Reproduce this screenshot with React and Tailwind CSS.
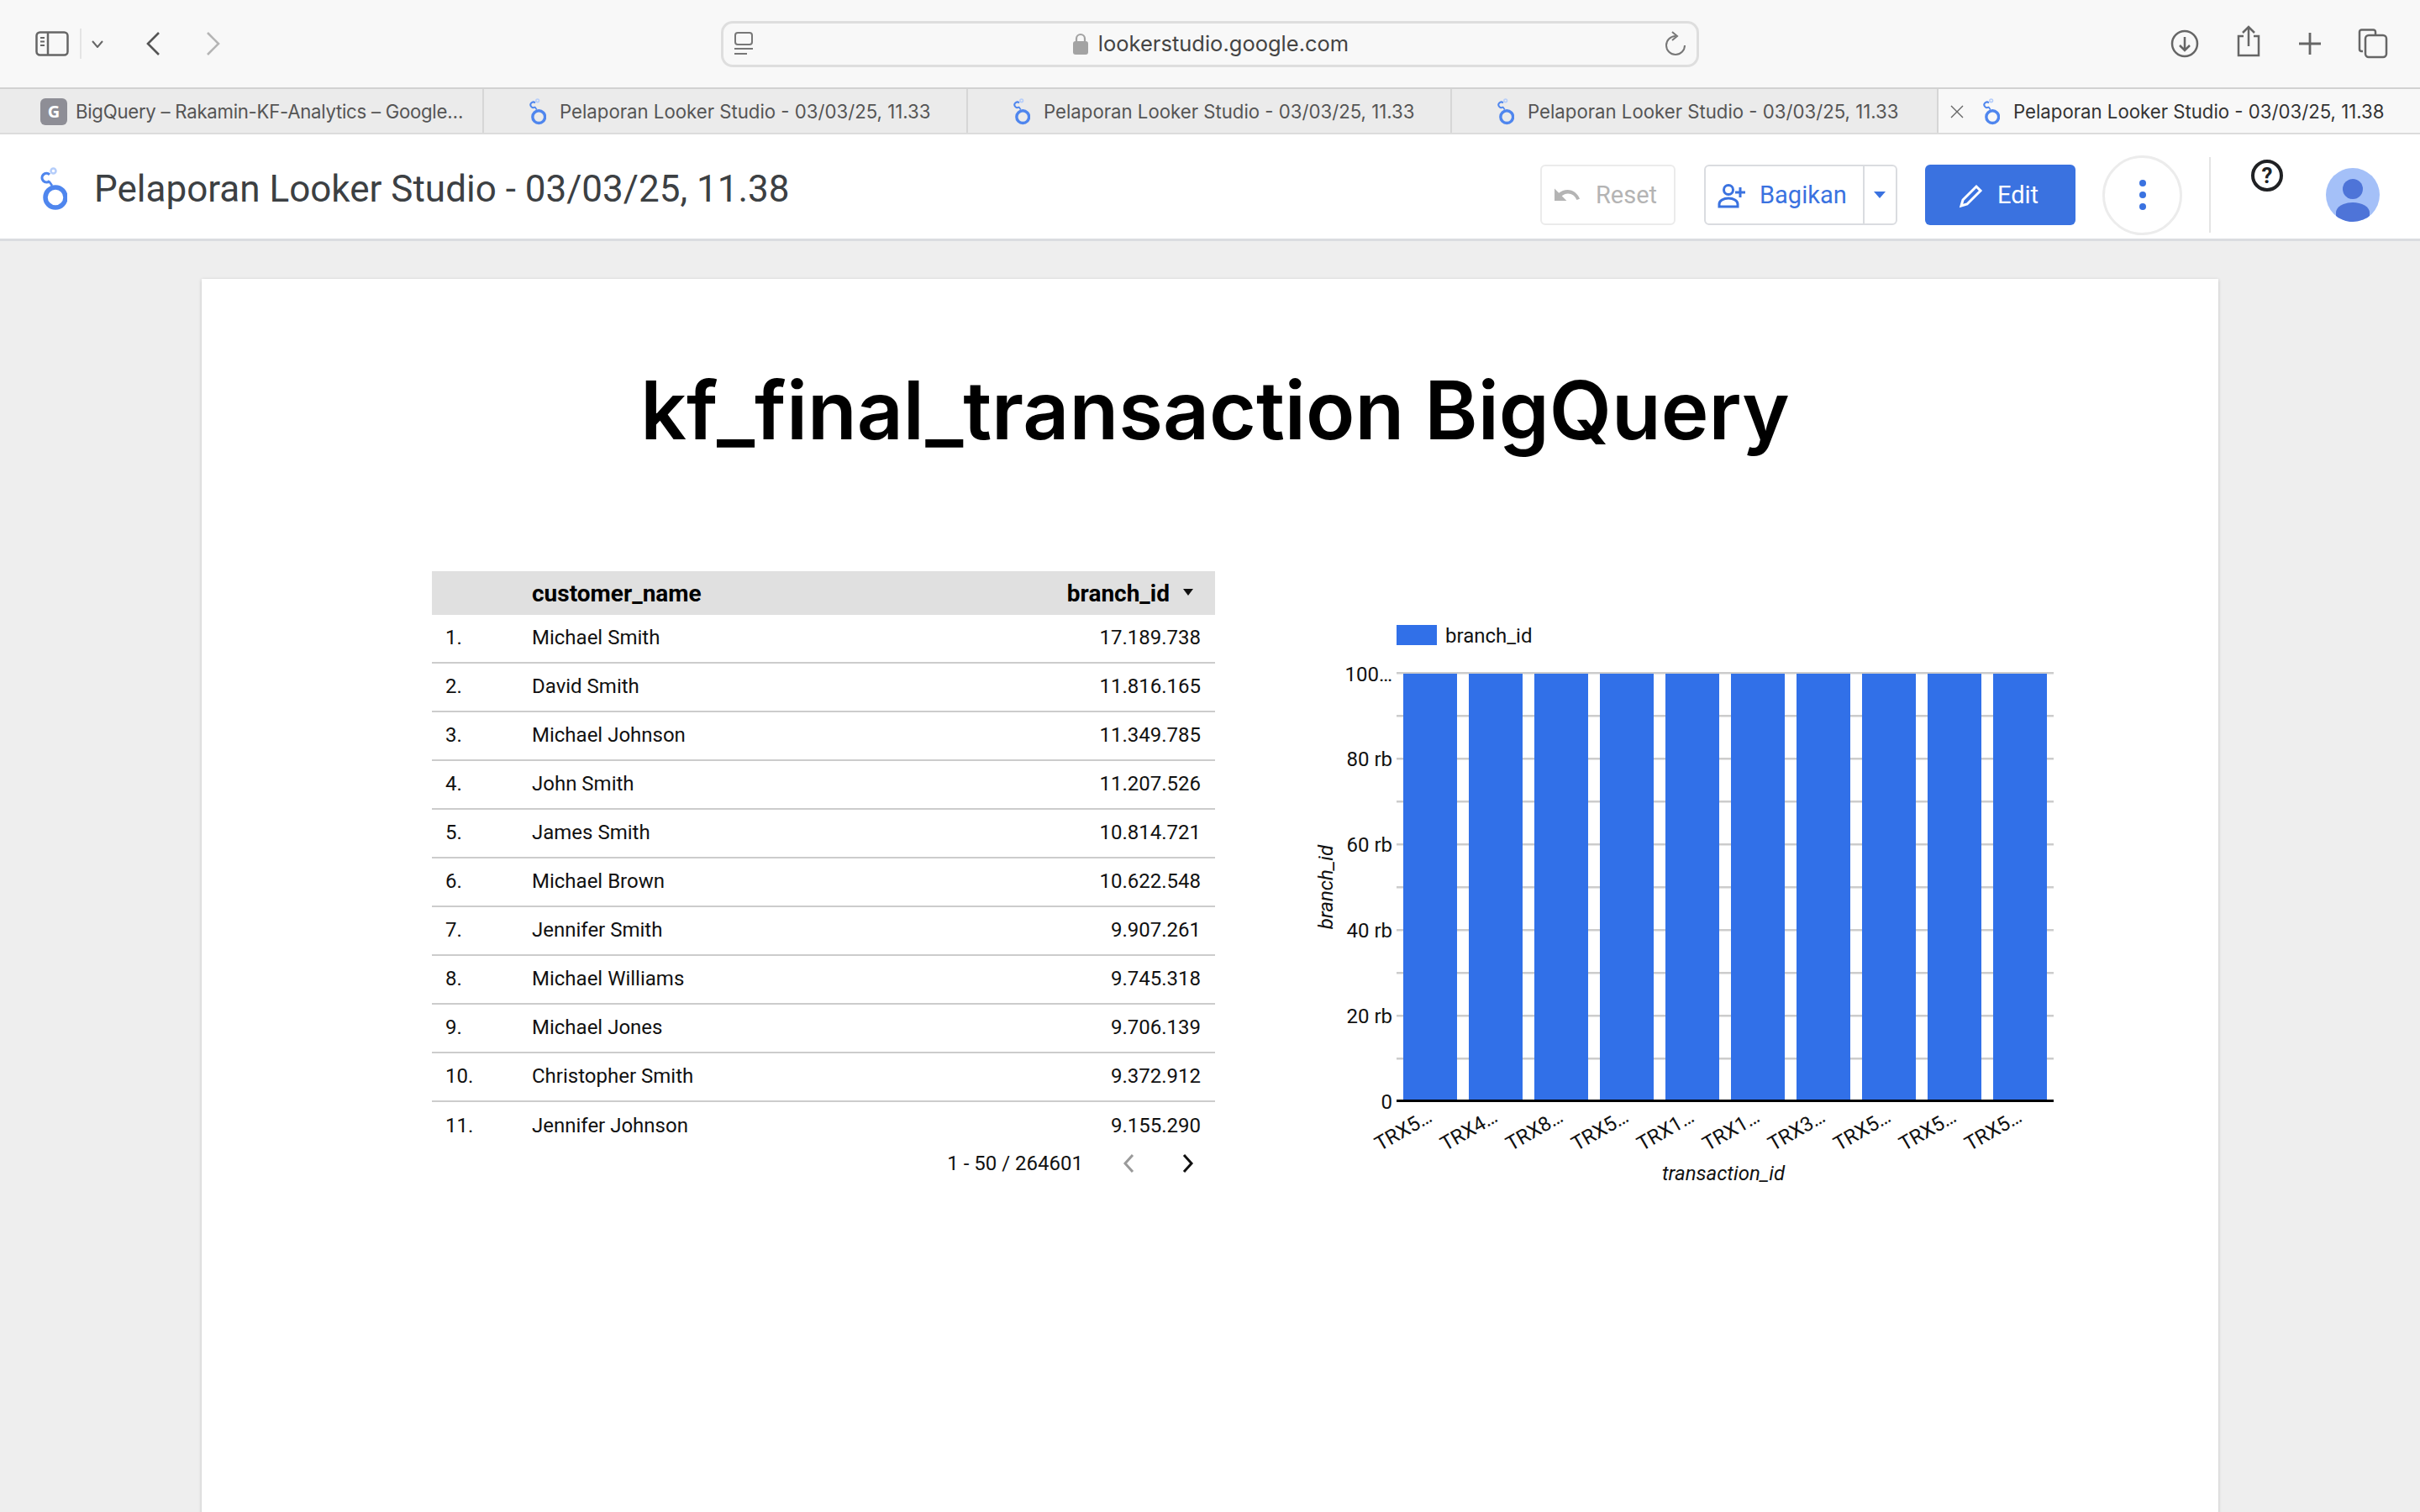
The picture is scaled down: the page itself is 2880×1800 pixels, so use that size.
import React from 'react'

const sf = 'font-["Inter",sans-serif]'
const roboto = 'font-["Roboto",sans-serif]'

const rows = [
  ['Michael Smith', '17.189.738'],
  ['David Smith', '11.816.165'],
  ['Michael Johnson', '11.349.785'],
  ['John Smith', '11.207.526'],
  ['James Smith', '10.814.721'],
  ['Michael Brown', '10.622.548'],
  ['Jennifer Smith', '9.907.261'],
  ['Michael Williams', '9.745.318'],
  ['Michael Jones', '9.706.139'],
  ['Christopher Smith', '9.372.912'],
  ['Jennifer Johnson', '9.155.290'],
]

const bars = [0, 1, 2, 3, 4, 5, 6, 7, 8, 9]
const xLabels = ['TRX5…', 'TRX4…', 'TRX8…', 'TRX5…', 'TRX1…', 'TRX1…', 'TRX3…', 'TRX5…', 'TRX5…', 'TRX5…']
const grid = [801, 852, 903, 954, 1005, 1056, 1107, 1158, 1209, 1260]

function LookerLogo({ className }) {
  return (
    <svg viewBox="0 0 32 52" className={className} fill="none">
      <circle cx="18" cy="36" r="12" stroke="#4f86ee" strokeWidth="5.500" />
      <path d="M11 16.500A5.300 5.300 0 1 1 11 8.800" stroke="#4f86ee" strokeWidth="3.200" />
      <path d="M10.500 17L14 22" stroke="#4f86ee" strokeWidth="2.600" />
      <circle cx="15.500" cy="4.500" r="3" stroke="#b5cdfa" strokeWidth="2.500" />
    </svg>
  )
}

function Tab({ title, icon, active, w, tight }) {
  return (
    <div className={`flex items-center h-full shrink-0 pt-[2px] ${w} ${active ? 'bg-[#f8f8f8]' : 'border-r-2 border-[#d6d6d6]'}`}>
      {active && (
        <svg viewBox="0 0 16 16" className="w-[16px] h-[16px] ml-[14px] mr-[23px] shrink-0" fill="none" stroke="#666" strokeWidth="1.4">
          <path d="M1 1l14 14M15 1L1 15" />
        </svg>
      )}
      {icon === 'g' ? (
        <div className="w-[32px] h-[32px] ml-[48px] mr-[10px] rounded-[6px] bg-[#8e8e96] text-white text-[20px] font-bold flex items-center justify-center shrink-0">G</div>
      ) : (
        <LookerLogo className={`w-[20px] h-[32px] shrink-0 mr-[16px] ${active ? '' : 'ml-[54px]'}`} />
      )}
      <span className={`${sf} text-[22.200px] whitespace-nowrap ${tight ? 'tracking-[-0.27px]' : ''} ${active ? 'text-[#333]' : 'text-[#555]'}`}>{title}</span>
    </div>
  )
}

function Toolbar() {
  return (
    <div className="h-[104px] bg-[#f8f8f8] flex items-center relative">
      <svg viewBox="0 0 40 30" className="w-[40px] h-[30px] ml-[42px]" fill="none" stroke="#666" strokeWidth="2.5">
        <rect x="1.5" y="1.5" width="37" height="27" rx="4" />
        <path d="M15 2v26" />
        <path d="M6 8h5M6 12.5h5M6 17h5" strokeWidth="2" />
      </svg>
      <div className="w-[2px] h-[36px] bg-[#e4e4e4] ml-[13px]" />
      <svg viewBox="0 0 14 9" className="w-[14px] h-[9px] ml-[12px]" fill="none" stroke="#666" strokeWidth="2">
        <path d="M1 1l6 7 6-7" />
      </svg>
      <svg viewBox="0 0 18 30" className="w-[18px] h-[30px] ml-[50px]" fill="none" stroke="#555" strokeWidth="2.6">
        <path d="M16 2L3 15l13 13" />
      </svg>
      <svg viewBox="0 0 18 30" className="w-[18px] h-[30px] ml-[54px]" fill="none" stroke="#b5b5b5" strokeWidth="2.6">
        <path d="M2 2l13 13L2 28" />
      </svg>
      <div className="ml-[595px] w-[1164px] h-[55px] rounded-[14px] border-[3px] border-[#dedede] flex items-center relative">
        <svg viewBox="0 0 24 28" className="w-[24px] h-[28px] ml-[12px]" fill="none" stroke="#777" strokeWidth="2">
          <rect x="2" y="1" width="20" height="14" rx="3" />
          <path d="M1 20h22M1 26h15" />
        </svg>
        <div className="flex-1 flex items-center justify-center gap-[12px] pl-[4px]">
          <svg viewBox="0 0 18 26" className="w-[18px] h-[26px]">
            <path d="M4 11V7a5 5 0 0 1 10 0v4" fill="none" stroke="#a3a3a3" strokeWidth="2.2" />
            <rect x="0" y="10" width="18" height="16" rx="3" fill="#a3a3a3" />
          </svg>
          <span className={`${sf} text-[25.500px] text-[#444]`}>lookerstudio.google.com</span>
        </div>
        <svg viewBox="0 0 26 30" className="w-[26px] h-[30px] mr-[12px]" fill="none" stroke="#777" strokeWidth="2">
          <path d="M13 6a11 11 0 1 0 11 11" />
          <path d="M9 1l6 5-6 5" />
        </svg>
      </div>
      <svg viewBox="0 0 34 34" className="w-[34px] h-[34px] ml-[561px]" fill="none" stroke="#666" strokeWidth="2.5">
        <circle cx="17" cy="17" r="15" />
        <path d="M17 9v16M11 19l6 6 6-6" />
      </svg>
      <svg viewBox="0 0 30 38" className="w-[30px] h-[38px] ml-[44px] mb-[6px]" fill="none" stroke="#666" strokeWidth="2.5">
        <path d="M9 13H3v23h24V13h-6" />
        <path d="M15 25V2M8 9l7-7 7 7" />
      </svg>
      <svg viewBox="0 0 28 28" className="w-[28px] h-[28px] ml-[44px]" fill="none" stroke="#666" strokeWidth="2.8">
        <path d="M14 1v26M1 14h26" />
      </svg>
      <svg viewBox="0 0 36 36" className="w-[36px] h-[36px] ml-[43px]" fill="none" stroke="#666" strokeWidth="2.5">
        <path d="M6 27H4a2.5 2.5 0 0 1-2-2.500V4a2.500 2.500 0 0 1 2.500-2.500h14A2.500 2.500 0 0 1 21 4v3" />
        <rect x="9" y="8" width="25" height="26" rx="4" />
      </svg>
    </div>
  )
}

function Tabs() {
  const t = 'Pelaporan Looker Studio - 03/03/25, 11.33'
  return (
    <div className="h-[56px] bg-[#ebebeb] flex border-t-2 border-b-2 border-t-[#d2d2d2] border-b-[#dcdcdc]">
      <Tab title="BigQuery – Rakamin-KF-Analytics – Google…" icon="g" w="w-[576px]" tight />
      <Tab title={t} w="w-[576px]" />
      <Tab title={t} w="w-[576px]" />
      <Tab title={t} w="w-[579px]" />
      <Tab title="Pelaporan Looker Studio - 03/03/25, 11.38" active w="w-[573px]" />
    </div>
  )
}

function Header() {
  return (
    <div className="h-[127px] bg-white border-b-[3px] border-[#dadce0] flex items-center pt-[20px]">
      <LookerLogo className="w-[32px] h-[52px] ml-[48px] mb-[14px] shrink-0" />
      <div className={`ml-[32px] mb-[14px] ${roboto} text-[44px] text-[#3c4043] whitespace-nowrap`}>Pelaporan Looker Studio - 03/03/25, 11.38</div>
      <div className="ml-auto flex items-center">
        <div className={`w-[161px] h-[72px] pt-[2px] rounded-[6px] border-2 border-[#ebebeb] flex items-center gap-[18px] pl-[14px] ${roboto} text-[29px] text-[#b4b4b4]`}>
          <svg viewBox="0 0 32 20" className="w-[32px] h-[20px]" fill="#b4b4b4">
            <path d="M16.500 3C12.600 3 9 4.400 6.200 6.800L1 1.600V16h14.400l-5.700-5.700c2-1.700 4.500-2.800 7.300-2.800 4.800 0 8.900 3.100 10.400 7.500l3.600-1.200C28.800 7.600 23.100 3 16.500 3z" />
          </svg>
          Reset
        </div>
        <div className={`ml-[34px] w-[230px] h-[72px] rounded-[6px] border-2 border-[#dadce0] flex items-center ${roboto} text-[29px] text-[#3a72e0]`}>
          <div className="w-[189px] h-full pt-[2px] flex items-center gap-[16px] pl-[14px] border-r-2 border-[#dadce0]">
            <svg viewBox="0 0 34 30" className="w-[34px] h-[30px]" fill="none" stroke="#3a72e0" strokeWidth="3">
              <circle cx="13" cy="8" r="5.500" />
              <path d="M2 28v-3c0-4 5-7 11-7s11 3 11 7v3z" />
              <path d="M27 5v12M21 11h12" />
            </svg>
            Bagikan
          </div>
          <svg viewBox="0 0 14 8" className="w-[14px] h-[8px] ml-[11px]" fill="#3a72e0">
            <path d="M0 0h14L7 8z" />
          </svg>
        </div>
        <div className={`ml-[33px] w-[179px] h-[72px] pt-[2px] rounded-[6px] bg-[#3a72e0] flex items-center gap-[16px] pl-[40px] ${roboto} text-[29px] text-white`}>
          <svg viewBox="0 0 30 30" className="w-[30px] h-[30px]" fill="none" stroke="white" strokeWidth="3">
            <path d="M3 27l2-7L21 4l5 5-16 16z" />
          </svg>
          Edit
        </div>
        <div className="ml-[32px] w-[95px] h-[95px] rounded-full border-[3px] border-[#ececec] flex flex-col items-center justify-center gap-[6px]">
          <div className="w-[8px] h-[8px] rounded-full bg-[#3a72e0]" />
          <div className="w-[8px] h-[8px] rounded-full bg-[#3a72e0]" />
          <div className="w-[8px] h-[8px] rounded-full bg-[#3a72e0]" />
        </div>
        <div className="ml-[32px] w-[2px] h-[90px] bg-[#e4e4e4]" />
        <div className="ml-[48px] mb-[46px] w-[38px] h-[38px] rounded-full border-[4px] border-[#202124] flex items-center justify-center font-['Roboto',sans-serif] font-bold text-[26px] text-[#202124]">?</div>
        <div className="ml-[51px] mr-[48px] w-[64px] h-[64px] rounded-full bg-[#a4c0f8] overflow-hidden flex flex-col items-center">
          <div className="w-[24px] h-[24px] rounded-full bg-[#4e74d8] mt-[13px] shrink-0" />
          <div className="w-[40px] h-[34px] rounded-[20px/12px] bg-[#4e74d8] mt-[4px] shrink-0" />
        </div>
      </div>
    </div>
  )
}

function DataTable() {
  return (
    <div className={`w-[932px] shrink-0 ${roboto} text-[24px] text-[#111]`}>
      <div className="h-[52px] pt-[2px] bg-[#e0e0e0] flex items-center font-bold text-[28px] text-black pl-[119px] pr-[26px]">
        <span>customer_name</span>
        <span className="ml-auto">branch_id</span>
        <svg viewBox="0 0 12 8" className="w-[12px] h-[8px] ml-[16px] mb-[4px]" fill="#111">
          <path d="M0 0h12L6 8z" />
        </svg>
      </div>
      <div className="h-[628px] overflow-hidden">
        {rows.map(([name, val], i) => (
          <div key={i} className={`h-[58px] flex items-center pr-[17px] pb-[2px] ${i < 10 ? 'border-b-2 border-[#ccc]' : ''}`}>
            <span className="w-[119px] pl-[16px]">{i + 1}.</span>
            <span>{name}</span>
            <span className="ml-auto">{val}</span>
          </div>
        ))}
      </div>
      <div className="h-[44px] mt-[3px] flex items-center justify-end">
        <span>1 - 50 / 264601</span>
        <svg viewBox="0 0 14 24" className="w-[14px] h-[24px] ml-[47px]" fill="none" stroke="#9a9a9a" strokeWidth="3">
          <path d="M12 2L3 12l9 10" />
        </svg>
        <svg viewBox="0 0 14 24" className="w-[14px] h-[24px] ml-[57px] mr-[25px]" fill="none" stroke="#111" strokeWidth="3">
          <path d="M2 2l9 10-9 10" />
        </svg>
      </div>
    </div>
  )
}

function BarChart() {
  return (
    <svg viewBox="1540 680 960 760" className="w-[960px] h-[760px] ml-[94px] shrink-0" fontFamily="Roboto, sans-serif" fontSize="24" fill="#111">
      <rect x="1662" y="744" width="48" height="24" fill="#3170e8" />
      <text x="1720" y="765">branch_id</text>
      {grid.map(y => (
        <rect key={y} x="1662" y={y - 1} width="782" height="2.500" fill="#ccc" />
      ))}
      {bars.map(i => (
        <rect key={i} x={1670 + i * 78} y="802" width="64" height="508" fill="#3170e8" />
      ))}
      <rect x="1662" y="1309" width="782" height="3" fill="#000" />
      <text x="1657" y="811" textAnchor="end">100…</text>
      <text x="1657" y="912" textAnchor="end">80 rb</text>
      <text x="1657" y="1014" textAnchor="end">60 rb</text>
      <text x="1657" y="1116" textAnchor="end">40 rb</text>
      <text x="1657" y="1218" textAnchor="end">20 rb</text>
      <text x="1657" y="1320" textAnchor="end">0</text>
      {xLabels.map((l, i) => (
        <text key={i} textAnchor="end" transform={`translate(${1706 + i * 78} 1334) rotate(-30)`}>{l}</text>
      ))}
      <text x="2051" y="1405" textAnchor="middle" fontStyle="italic">transaction_id</text>
      <text textAnchor="middle" fontStyle="italic" transform="translate(1586 1056) rotate(-90)">branch_id</text>
    </svg>
  )
}

export default function App() {
  return (
    <div className="w-[2880px] h-[1800px] overflow-hidden bg-[#eeeeee] flex flex-col">
      <Toolbar />
      <Tabs />
      <Header />
      <div className="flex-1 min-h-0 px-[240px] pt-[45px]">
        <div className="bg-white h-[1600px] shadow-[0_1px_4px_rgba(0,0,0,0.2)]">
          <div className={`pt-[98px] pl-[12px] h-[348px] text-center ${sf} font-semibold text-[96px] leading-[116px] text-black`}>
            kf_final_transaction BigQuery
          </div>
          <div className="flex pl-[274px]">
            <DataTable />
            <BarChart />
          </div>
        </div>
      </div>
    </div>
  )
}
